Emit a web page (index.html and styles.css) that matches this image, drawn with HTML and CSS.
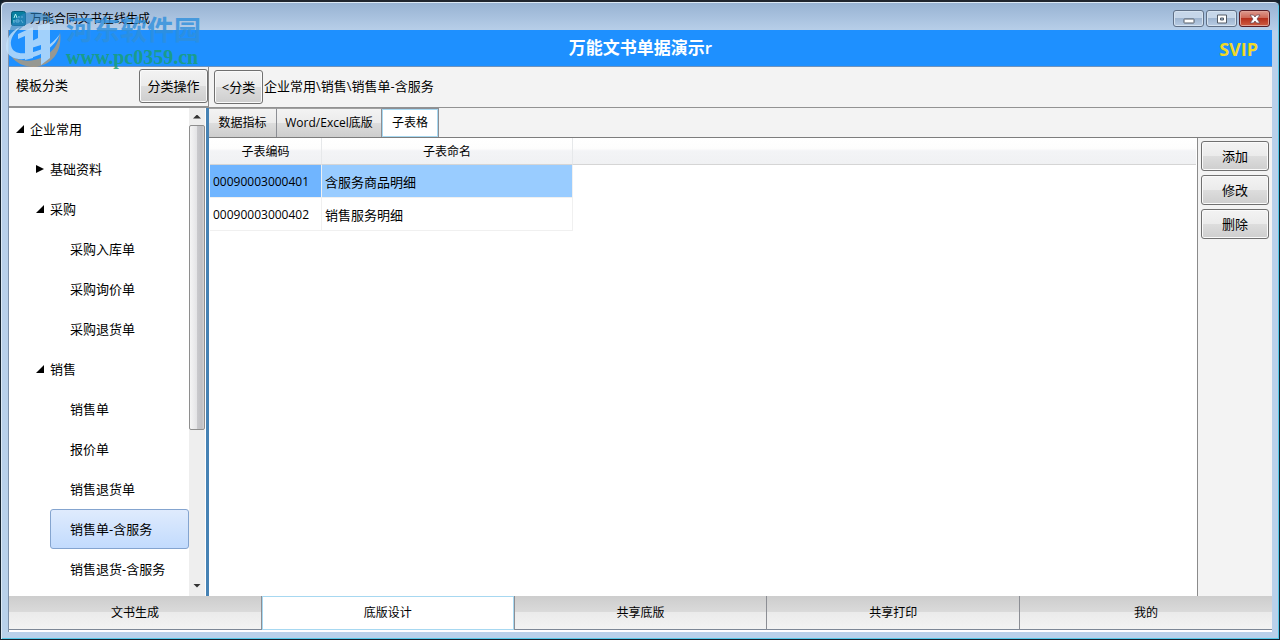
FILE: index.html
```
<!DOCTYPE html>
<html lang="zh-CN">
<head>
<meta charset="utf-8">
<title>万能合同文书在线生成</title>
<link rel="stylesheet" href="styles.css">
</head>
<body>
<div class="window">
  <header class="titlebar">
    <svg class="app-icon" width="15" height="15" viewBox="0 0 15 15" aria-hidden="true">
      <rect x=".5" y=".5" width="14" height="14" rx="2" fill="#087fa0" stroke="#075d7b"/>
      <path d="M3 7l1.500-4L6 7M7 6h2M10 6h2M3 9v3M5 9h3v2H5zM10 9l2 3" fill="none" stroke="#b6f3f5"/>
    </svg>
    <span class="window-title">万能合同文书在线生成</span>
    <div class="window-controls">
      <button class="win-btn" type="button" aria-label="最小化"><svg width="12" height="12" viewBox="0 0 12 12"><rect x="1" y="6" width="10" height="4" rx=".5" fill="#fff" stroke="#535b66"/></svg></button>
      <button class="win-btn" type="button" aria-label="最大化"><svg width="12" height="12" viewBox="0 0 12 12"><path d="M1.500 2h9v8h-9zM4.500 5v2h3V5z" fill="#fff" fill-rule="evenodd" stroke="#535b66"/></svg></button>
      <button class="win-btn win-close" type="button" aria-label="关闭"><svg width="12" height="12" viewBox="0 0 12 12"><path d="M1 2h3.500L6 4l1.500-2H11L8 6l3 4H7.500L6 8l-1.500 2H1l3-4z" fill="#fff" stroke="#6c4b55" stroke-width=".8"/></svg></button>
    </div>
  </header>

  <div class="client">
    <div class="banner">
      <h1 class="banner-title">万能文书单据演示r</h1>
      <span class="vip">SVIP</span>
    </div>

    <div class="body">
      <aside class="sidebar">
        <div class="bar sidebar-bar">
          <span>模板分类</span>
          <button class="btn" type="button">分类操作</button>
        </div>
        <div class="tree-wrap">
          <ul class="tree">
            <li class="node open level-1">企业常用</li>
            <li class="node closed level-2">基础资料</li>
            <li class="node open level-2">采购</li>
            <li class="node level-3">采购入库单</li>
            <li class="node level-3">采购询价单</li>
            <li class="node level-3">采购退货单</li>
            <li class="node open level-2">销售</li>
            <li class="node level-3">销售单</li>
            <li class="node level-3">报价单</li>
            <li class="node level-3">销售退货单</li>
            <li class="node level-3 selected">销售单-含服务</li>
            <li class="node level-3">销售退货-含服务</li>
          </ul>
          <div class="scrollbar">
            <span class="arrow arrow-up"></span>
            <div class="track"><div class="thumb"></div></div>
            <span class="arrow arrow-down"></span>
          </div>
        </div>
      </aside>

      <main class="main">
        <div class="bar crumb-bar">
          <button class="btn btn-back" type="button">&lt;分类</button>
          <span>企业常用\销售\销售单-含服务</span>
        </div>
        <div class="tabs">
          <button class="tab" type="button">数据指标</button>
          <button class="tab tab-wide" type="button">Word/Excel底版</button>
          <button class="tab active" type="button">子表格</button>
        </div>
        <div class="content">
          <div class="grid-area">
            <table class="grid">
              <thead>
                <tr><th class="col-code">子表编码</th><th class="col-name">子表命名</th><td class="col-rest"></td></tr>
              </thead>
              <tbody>
                <tr class="current"><td>00090003000401</td><td>含服务商品明细</td></tr>
                <tr><td>00090003000402</td><td>销售服务明细</td></tr>
              </tbody>
            </table>
          </div>
          <div class="actions">
            <button class="btn" type="button">添加</button>
            <button class="btn" type="button">修改</button>
            <button class="btn" type="button">删除</button>
          </div>
        </div>
      </main>
    </div>

    <nav class="bottom-nav">
      <button class="nav-tab" type="button">文书生成</button>
      <button class="nav-tab active" type="button">底版设计</button>
      <button class="nav-tab" type="button">共享底版</button>
      <button class="nav-tab" type="button">共享打印</button>
      <button class="nav-tab" type="button">我的</button>
    </nav>
  </div>

  <div class="watermark">
    <svg width="58" height="58" viewBox="0 0 58 58" aria-hidden="true">
      <path d="M4 26C5 10 16 2 28 2c11 0 19 5 24 12C40 8 25 10 15 19 8 25 4 31 4 38 3 34 3 30 4 26z" fill="#2f86c4" opacity=".75"/>
      <path d="M55 22c3 20-9 34-26 35-10 0-18-4-23-11 9 6 22 6 32 1 10-5 16-13 17-25z" fill="#b59a78"/>
      <path d="M15 17C5 22 0 30 1 39c2 9 12 12 24 9 13-3 25-12 30-24-9 12-21 18-33 19-9 1-15-1-16-8-1-6 3-12 9-18z" fill="#c3e2fb"/>
      <path d="M13 24l15-7v31l-8 2V26l-7 3z" fill="#c3e2fb"/>
      <path d="M33 16l12-4v36l-9 7V35l-13 4v-6l10-5z" fill="#c3e2fb"/>
    </svg>
    <div class="watermark-text">
      <span class="watermark-name">河东软件园</span>
      <span class="watermark-url">www.pc0359.cn</span>
    </div>
  </div>
</div>
</body>
</html>
```
FILE: styles.css
```
* { box-sizing: border-box; }

body {
  margin: 0;
  background: #10202c;
  color: #000;
  font: 13px/18px "Open Sans", "Noto Sans CJK SC", sans-serif;
}

button { font: inherit; color: inherit; padding: 0; margin: 0; }

.window {
  position: relative;
  display: flex;
  flex-direction: column;
  height: 100vh;
  padding: 0 7px 7px;
  border: 1px solid #17242f;
  border-top: 2px solid #20252e;
  border-radius: 6px 6px 0 0;
  background: linear-gradient(#97b2d2 0, #b9d0ea 30px, #b9d1ea 100%);
  box-shadow: inset 1px 1px #dce9f5, inset -1px -1px #55c9e8;
}

.titlebar {
  display: flex;
  flex: none;
  align-items: center;
  height: 28px;
  padding: 5px 2px 0 3px;
  font-size: 12px;
}
.app-icon { flex: none; margin-right: 4px; }
.window-controls { display: flex; gap: 2px; margin-left: auto; }
.win-btn {
  display: grid;
  place-items: center;
  width: 31px;
  height: 17px;
  border: 1px solid #5f6f86;
  border-radius: 3px;
  background: linear-gradient(#c6d6e9 0 45%, #9fb5d0 50%, #b8cce4);
  box-shadow: inset 0 0 0 1px #d5e2f0;
}
.win-close {
  border-color: #571c25;
  background: linear-gradient(#dd9a8e 0, #cf6857 45%, #b5301d 50%, #cf5d42);
  box-shadow: inset 0 0 0 1px #dfa196;
}

.client {
  display: flex;
  flex: 1;
  flex-direction: column;
  min-height: 0;
  border-left: 1px solid #7d90a8;
  background: #fff;
}

.banner {
  display: grid;
  flex: none;
  grid-template-columns: 1fr auto 1fr;
  align-items: center;
  height: 37px;
  border-bottom: 1px solid #6f93bd;
  background: #1e90ff;
}
.banner-title {
  grid-column: 2;
  margin: 0;
  color: #fff;
  font-size: 17px;
  font-weight: 600;
  line-height: 24px;
}
.vip {
  justify-self: end;
  padding: 2px 14px 0 0;
  color: #f0d828;
  font-size: 18px;
  font-weight: 700;
  line-height: 24px;
}

.body { display: flex; flex: 1; min-height: 0; }

.sidebar {
  display: flex;
  flex: none;
  flex-direction: column;
  width: 200px;
}
.bar {
  display: flex;
  flex: none;
  align-items: center;
  height: 41px;
  padding-bottom: 1px;
  border-bottom: 2px solid #929292;
  background: #f3f3f3;
}
.bar span { padding-bottom: 2px; }
.sidebar-bar {
  justify-content: space-between;
  padding-left: 7px;
  border-right: 1px solid #8b8b8b;
}
.sidebar-bar .btn { width: 69px; height: 34px; }

.btn {
  border: 1px solid #707070;
  border-radius: 3px;
  background: linear-gradient(#f3f3f3 0, #ebebeb 50%, #dddddd 50%, #cecece 100%);
  box-shadow: inset 0 0 0 1px #fafafa;
}

.tree-wrap {
  display: flex;
  flex: 1;
  min-height: 0;
  padding-right: 1px;
  border-right: 3px solid #4682b4;
}
.tree {
  flex: 1;
  margin: 0;
  padding: 1px 0 0;
  overflow: hidden;
  list-style: none;
}
.node {
  display: flex;
  align-items: center;
  height: 40px;
  border: 1px solid transparent;
}
.level-1 { padding-left: 6px; }
.level-2 { padding-left: 26px; }
.level-3 { margin-left: 41px; padding-left: 19px; }
.open::before, .closed::before {
  flex: none;
  width: 8px;
  height: 8px;
  margin-right: 6px;
  background: #000;
  clip-path: polygon(100% 0, 100% 100%, 0 100%);
  content: "";
}
.closed::before { clip-path: polygon(0 0, 100% 50%, 0 100%); }
.selected {
  border-color: #84a4cf;
  border-radius: 3px;
  background: linear-gradient(#dfebfd, #c2dbfd);
}

.scrollbar {
  display: flex;
  flex: none;
  flex-direction: column;
  width: 16px;
  padding-bottom: 2px;
  background: #eeeeee;
}
.arrow { display: grid; flex: none; place-items: center; height: 17px; }
.arrow::before {
  width: 8px;
  height: 4px;
  background: #333;
  clip-path: polygon(0 0, 100% 0, 50% 100%);
  content: "";
}
.arrow-up::before { clip-path: polygon(50% 0, 100% 100%, 0 100%); }
.track { flex: 1; }
.thumb {
  height: 67.500%;
  border: 1px solid #8e8e8e;
  border-radius: 2px;
  background: linear-gradient(90deg, #f5f5f5, #e4e4e6 48%, #c9c9cc 52%, #bfbfc3 85%, #d4d4d6);
}

.main { display: flex; flex: 1; flex-direction: column; min-width: 0; }
.crumb-bar { gap: 1px; padding-left: 5px; border-bottom-width: 1px; }
.btn-back { width: 49px; height: 34px; }

.tabs {
  display: flex;
  flex: none;
  height: 30px;
  border-bottom: 1px solid #7d7d7d;
  background: #f3f3f3;
  font-size: 12px;
}
.tab {
  width: 68px;
  border: 0;
  border-top: 1px solid #a0a0a0;
  border-right: 1px solid #8c8e94;
  background: linear-gradient(#f3f3f3 0, #ebebeb 50%, #dddddd 50%, #cdcdcd 100%);
}
.tab-wide { width: 105px; }
.tab.active {
  width: 57px;
  border: 1px solid #8c8e94;
  border-width: 1px 1px 0 0;
  background: #fff;
  box-shadow: inset 0 0 0 1px #a7d8f1;
}

.content { display: flex; flex: 1; min-height: 0; }
.grid-area { flex: 1; padding: 0 1px; background: #fff; }
.grid {
  width: 100%;
  border-collapse: separate;
  border-spacing: 0;
  table-layout: fixed;
  font-size: 12px;
}
.grid th, .grid thead td {
  height: 27px;
  padding: 2px 0 0;
  border-right: 1px solid #e6e8ea;
  border-bottom: 1px solid #d5d5d5;
  background: linear-gradient(#fff 0, #fdfdfd 40%, #f3f4f6 50%, #f0f1f3);
  font-weight: 400;
}
.grid thead .col-rest { border-right: 0; }
.col-code { width: 112px; }
.col-name { width: 251px; }
.grid tbody td {
  height: 33px;
  padding: 1px 3px 0;
  border-right: 1px solid #f0f0f0;
  border-bottom: 1px solid #f0f0f0;
}
.grid tbody td + td { font-size: 13px; }
.grid .current td { background: #99ccff; }
.grid .current td:first-child { background: #70b5ff; }

.actions {
  display: flex;
  flex: none;
  flex-direction: column;
  gap: 4px;
  width: 75px;
  padding: 3px 3px 0;
  border-left: 1px solid #8b8b8b;
  background: #f3f3f3;
}
.actions .btn { height: 30px; }

.bottom-nav {
  display: flex;
  flex: none;
  height: 36px;
  padding-bottom: 2px;
  font-size: 12px;
}
.nav-tab {
  flex: 1;
  border: 0;
  border-right: 1px solid #8c8e94;
  border-bottom: 1px solid #7d8796;
  background: linear-gradient(#cdcdcd 0, #dadada 48%, #ebebeb 50%, #f3f3f3 100%);
}
.nav-tab:last-child { border-right: 0; }
.nav-tab.active {
  border-bottom: 0;
  background: #fff;
  box-shadow: inset 0 0 0 1px #a7d8f1;
}

.watermark {
  position: absolute;
  top: 8px;
  left: 4px;
  display: flex;
  opacity: .8;
  pointer-events: none;
}
.watermark-text { display: flex; flex-direction: column; padding: 5px 0 0 3px; }
.watermark-name {
  color: #2f8fdc;
  font-size: 27px;
  font-weight: 700;
  line-height: 30px;
}
.watermark-url {
  color: #18a070;
  font: 700 20px/24px "Liberation Serif", serif;
}
```
